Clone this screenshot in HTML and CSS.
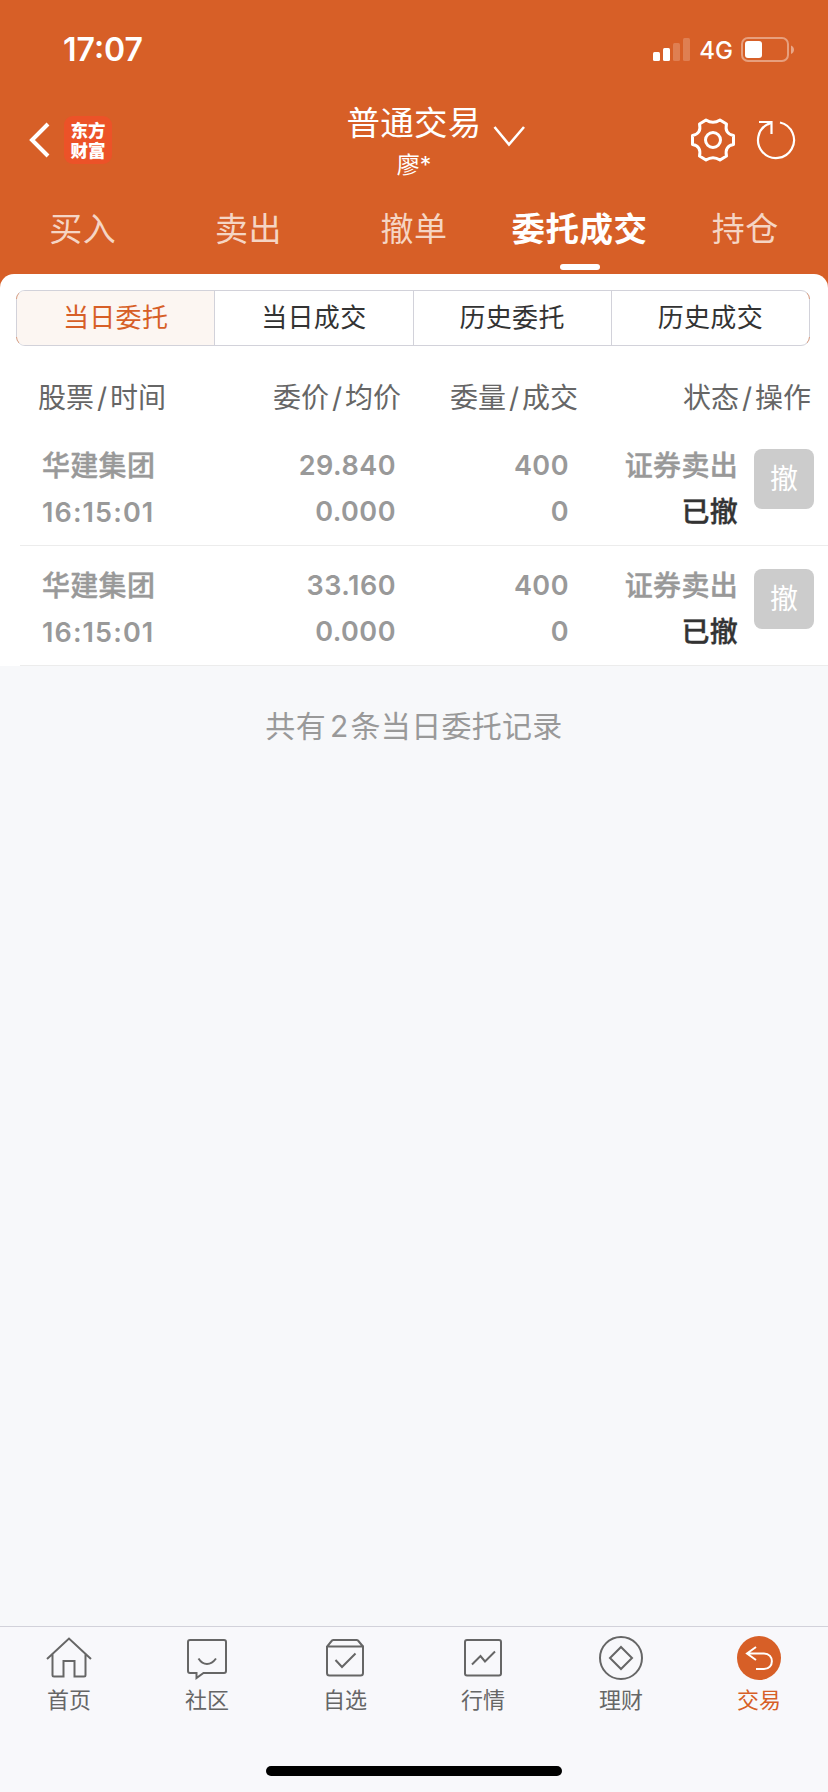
FILE: index.html
```
<!DOCTYPE html>
<html lang="zh-CN">
<head>
    <meta charset="UTF-8">
    <title>普通交易</title>
    <link rel="stylesheet" href="styles.css">
</head>
<body>
    <div class="app">
        <header class="header">
            <div class="status-bar">
                <span class="time">17:07</span>
                <div class="status-icons">
                    <svg class="signal" width="38" height="24" viewBox="0 0 38 24" fill="#fff">
                        <rect x="0" y="14" width="7" height="9" rx="1.5"/>
                        <rect x="10" y="10" width="7" height="13" rx="1.5"/>
                        <rect x="20" y="5" width="7" height="18" rx="1.5" opacity=".2"/>
                        <rect x="30" y="0" width="7" height="23" rx="1.5" opacity=".2"/>
                    </svg>
                    <span class="network">4G</span>
                    <svg class="battery" width="54" height="26" viewBox="0 0 54 26" fill="none">
                        <rect x="1" y="1" width="46" height="23" rx="6" stroke="#fff" stroke-width="2" opacity=".4"/>
                        <rect x="4" y="4" width="17" height="17" rx="3" fill="#fff"/>
                        <path d="M50 8.500c4 1.500 4 7 0 8.500z" fill="#fff" opacity=".45"/>
                    </svg>
                </div>
            </div>
            <div class="nav">
                <div class="nav-left">
                    <svg width="22" height="38" viewBox="0 0 22 38" fill="none" stroke="#fff" stroke-width="4">
                        <path d="M19 3L3 19l16 16"/>
                    </svg>
                    <div class="logo">东方<br>财富</div>
                </div>
                <div class="nav-center">
                    <div class="title">普通交易</div>
                    <div class="account">廖*</div>
                    <svg class="arrow" width="32" height="22" viewBox="0 0 32 22" fill="none" stroke="#fff" stroke-width="2.600">
                        <path d="M1.500 2L16 19.500 31 2"/>
                    </svg>
                </div>
                <div class="nav-right">
                    <svg width="46" height="46" viewBox="-23 -23 46 46" fill="none" stroke="#fff" stroke-width="3" stroke-linejoin="round">
                        <path d="M-7-20Q0-15.500 7-20L13.500-16C12-9.500 14.500-5.500 20.500-4.500V4.500C14.500 5.500 12 9.500 13.500 16L7 20Q0 15.500-7 20L-13.500 16C-12 9.500-14.500 5.500-20.500 4.500V-4.500C-14.500-5.500-12-9.500-13.500-16Z"/>
                        <circle r="7.500"/>
                    </svg>
                    <svg width="40" height="40" viewBox="-20 -20 40 40" fill="none" stroke="#fff" stroke-width="2.200">
                        <path d="M4-17.500A18 18 0 1 1-7.500-16.300M-17-18H-4.500V-6M-4.500-18L-8-15.500"/>
                    </svg>
                </div>
            </div>
            <div class="tabs">
                <div class="tab">买入</div>
                <div class="tab">卖出</div>
                <div class="tab">撤单</div>
                <div class="tab active">委托成交</div>
                <div class="tab">持仓</div>
            </div>
        </header>

        <main class="content">
            <div class="panel">
                <div class="segment">
                    <div class="segment-item selected">当日委托</div>
                    <div class="segment-item">当日成交</div>
                    <div class="segment-item">历史委托</div>
                    <div class="segment-item">历史成交</div>
                </div>
                <div class="list-head">
                    <span>股票<i>/</i>时间</span>
                    <span>委价<i>/</i>均价</span>
                    <span>委量<i>/</i>成交</span>
                    <span>状态<i>/</i>操作</span>
                </div>
                <div class="order">
                    <div class="cell stock">华建集团<br><span class="num clock">16:15:01</span></div>
                    <div class="cell num">29.840<br>0.000</div>
                    <div class="cell num">400<br>0</div>
                    <div class="cell">证券卖出<br><span class="state">已撤</span></div>
                    <div class="cancel">撤</div>
                </div>
                <div class="order">
                    <div class="cell stock">华建集团<br><span class="num clock">16:15:01</span></div>
                    <div class="cell num">33.160<br>0.000</div>
                    <div class="cell num">400<br>0</div>
                    <div class="cell">证券卖出<br><span class="state">已撤</span></div>
                    <div class="cancel">撤</div>
                </div>
            </div>
            <div class="summary">共有<span class="count">2</span>条当日委托记录</div>
        </main>

        <footer class="tabbar">
            <div class="bar-item">
                <svg width="46" height="46" viewBox="0 0 46 46">
                    <path d="M1 23L23 2.500 45 23M6.500 18.500V39q0 1.500 1.500 1.500H17.500V25H28.500V40.500H38q1.500 0 1.500-1.500V18.500"/>
                </svg>
                <span>首页</span>
            </div>
            <div class="bar-item">
                <svg width="46" height="46" viewBox="0 0 46 46">
                    <path d="M6 4H40q2 0 2 2V35q0 2-2 2H19.500L12.500 42V37H6q-2 0-2-2V6q0-2 2-2zM14.500 22.500q3.500 5.500 8.500 5.500t9-5.500"/>
                </svg>
                <span>社区</span>
            </div>
            <div class="bar-item">
                <svg width="46" height="46" viewBox="0 0 46 46">
                    <path d="M5 10.500H41V37q0 2.500-2.500 2.500H7.500Q5 39.500 5 37V10.500L10 4.500Q10.500 4 11.500 4H34.500Q35.500 4 36 4.500L41 10.500M13.500 24l6.500 7L33.500 17.500"/>
                </svg>
                <span>自选</span>
            </div>
            <div class="bar-item">
                <svg width="46" height="46" viewBox="0 0 46 46">
                    <rect x="5" y="4" width="36" height="35.500" rx="2"/>
                    <path d="M12 28.500l8.500-8.500 4.500 5.500L35 15.500"/>
                </svg>
                <span>行情</span>
            </div>
            <div class="bar-item">
                <svg width="46" height="46" viewBox="0 0 46 46">
                    <circle cx="23" cy="22" r="21"/>
                    <path d="M23 11L34 22 23 33 12 22z"/>
                </svg>
                <span>理财</span>
            </div>
            <div class="bar-item current">
                <svg width="46" height="46" viewBox="0 0 46 46">
                    <circle class="disc" cx="23" cy="22" r="22"/>
                    <path d="M20 11L11 17.500 20 24M11 17.500H28C38.500 17.500 38.500 33 28 33H20"/>
                </svg>
                <span>交易</span>
            </div>
        </footer>
        <div class="home-indicator"></div>
    </div>
</body>
</html>
```
FILE: styles.css
```
* {
    box-sizing: border-box;
}

body {
    margin: 0;
    font-family: Inter, "Noto Sans CJK SC", sans-serif;
    background: #f7f8fa;
}

svg {
    display: block;
}

.app {
    display: flex;
    flex-direction: column;
    width: 828px;
    height: 1792px;
    background: #f7f8fa;
}

/* header */
.header {
    height: 274px;
    background: #d75f27;
    color: #fff;
}

.status-bar {
    display: flex;
    justify-content: space-between;
    height: 100px;
    padding: 30px 33px 0 63px;
}

.time {
    font-size: 32px;
    line-height: 40px;
    font-weight: 600;
}

.status-icons {
    display: flex;
    align-items: flex-start;
    padding-top: 7px;
}

.signal {
    margin-top: 1px;
}

.network {
    width: 50px;
    text-align: center;
    font-size: 24px;
    line-height: 28px;
    font-weight: 500;
}

.nav {
    display: grid;
    grid-template-columns: 1fr 132px 1fr;
    height: 90px;
}

.nav-left {
    display: flex;
    align-items: center;
    gap: 13px;
    height: 80px;
    padding-left: 29px;
}

.logo {
    width: 48px;
    height: 48px;
    padding-top: 4px;
    border-radius: 9px;
    background: #ec5228;
    font-family: "Noto Sans CJK SC", sans-serif;
    font-size: 17.5px;
    line-height: 19.5px;
    font-weight: 900;
    text-align: center;
}

.nav-center {
    position: relative;
    display: flex;
    flex-direction: column;
    align-items: center;
    white-space: nowrap;
}

.title {
    font-size: 33.5px;
    line-height: 47px;
    letter-spacing: 0.3px;
}

.account {
    font-size: 23px;
    line-height: 37px;
}

.arrow {
    position: absolute;
    left: 145px;
    top: 25px;
}

.nav-right {
    display: flex;
    align-items: center;
    justify-content: flex-end;
    gap: 20px;
    height: 80px;
    padding-right: 32px;
}

.tabs {
    display: flex;
    height: 84px;
}

.tab {
    flex: 1;
    display: flex;
    flex-direction: column;
    align-items: center;
    padding-top: 19px;
    font-size: 33px;
    line-height: 40px;
    letter-spacing: 0.5px;
    color: #f5d5c4;
}

.tab.active {
    color: #fff;
    font-size: 33.5px;
    font-weight: 700;
}

.tab.active::after {
    content: "";
    width: 40px;
    height: 6px;
    margin-top: 15px;
    border-radius: 3px;
    background: #fff;
}

/* list */
.content {
    flex: 1;
    background: linear-gradient(#d75f27 20px, #f7f8fa 20px);
}

.panel {
    height: 392px;
    padding-top: 16px;
    background: #fff;
    border-radius: 14px 14px 0 0;
}

.segment {
    position: relative;
    display: flex;
    width: 794px;
    height: 56px;
    margin-left: 16px;
    border: 1px solid #d2d2da;
    border-radius: 9px;
}

/* orange tint on the rounded corners only */
.segment::after {
    content: "";
    position: absolute;
    inset: -1px;
    border: 1px solid #dd9a78;
    border-top-color: transparent;
    border-bottom-color: transparent;
    border-radius: 9px;
    mask-image: linear-gradient(#000 9px, transparent 9px, transparent 47px, #000 47px);
}

.segment-item {
    flex: 1;
    text-align: center;
    font-size: 26px;
    line-height: 54px;
    letter-spacing: 0.3px;
    color: #333;
}

.segment-item + .segment-item {
    border-left: 1px solid #d2d2da;
}

.segment-item.selected {
    color: #d75f27;
    background: #fcf6f2;
    border-radius: 8px 0 0 8px;
}

.list-head {
    display: grid;
    grid-template-columns: 190px 173px 177px 233px;
    height: 80px;
    padding: 32px 0 0 38px;
    font-size: 28px;
    line-height: 40px;
    color: #666;
    text-align: right;
}

.list-head span:first-child {
    text-align: left;
}

.list-head i {
    font-style: normal;
    padding: 0 3px;
}

.order {
    display: grid;
    grid-template-columns: 180px 174px 173px 169px 78px;
    height: 120px;
    margin-left: 20px;
    padding: 17px 0 0 22px;
    border-bottom: 1px solid #ececec;
}

.cell {
    font-size: 28px;
    line-height: 46px;
    font-weight: 500;
    letter-spacing: 0.3px;
    color: #999;
    text-align: right;
    -webkit-text-stroke: 0.4px;
}

.stock {
    text-align: left;
}

.num {
    font-size: 27px;
    font-weight: 600;
    letter-spacing: 0.5px;
    -webkit-text-stroke: 0;
}

.clock {
    letter-spacing: 1.1px;
}

.state {
    color: #333;
}

.cancel {
    width: 60px;
    height: 60px;
    margin: 6px 0 0 16px;
    border-radius: 8px;
    background: #ccc;
    color: #fff;
    font-size: 28px;
    line-height: 60px;
    text-align: center;
}

.summary {
    padding-top: 40px;
    text-align: center;
    font-size: 30px;
    line-height: 40px;
    letter-spacing: 0.3px;
    color: #999;
}

.count {
    padding: 0 2px 0 4px;
}

/* bottom bar */
.tabbar {
    display: flex;
    height: 140px;
    border-top: 1px solid #d2d2da;
    background: #f8f8fb;
}

.bar-item {
    flex: 1;
    display: flex;
    flex-direction: column;
    align-items: center;
    padding-top: 9px;
    font-size: 22px;
    line-height: 36px;
    color: #666;
}

.bar-item svg {
    fill: none;
    stroke: #666;
    stroke-width: 2;
}

.bar-item.current {
    color: #d75f27;
}

.bar-item.current svg {
    stroke: #fff;
}

.bar-item .disc {
    fill: #d75f27;
    stroke: none;
}

.home-indicator {
    height: 26px;
    background: #f8f8fb;
}

.home-indicator::before {
    content: "";
    display: block;
    width: 296px;
    height: 10px;
    margin: 0 auto;
    border-radius: 5px;
    background: #000;
}
```
